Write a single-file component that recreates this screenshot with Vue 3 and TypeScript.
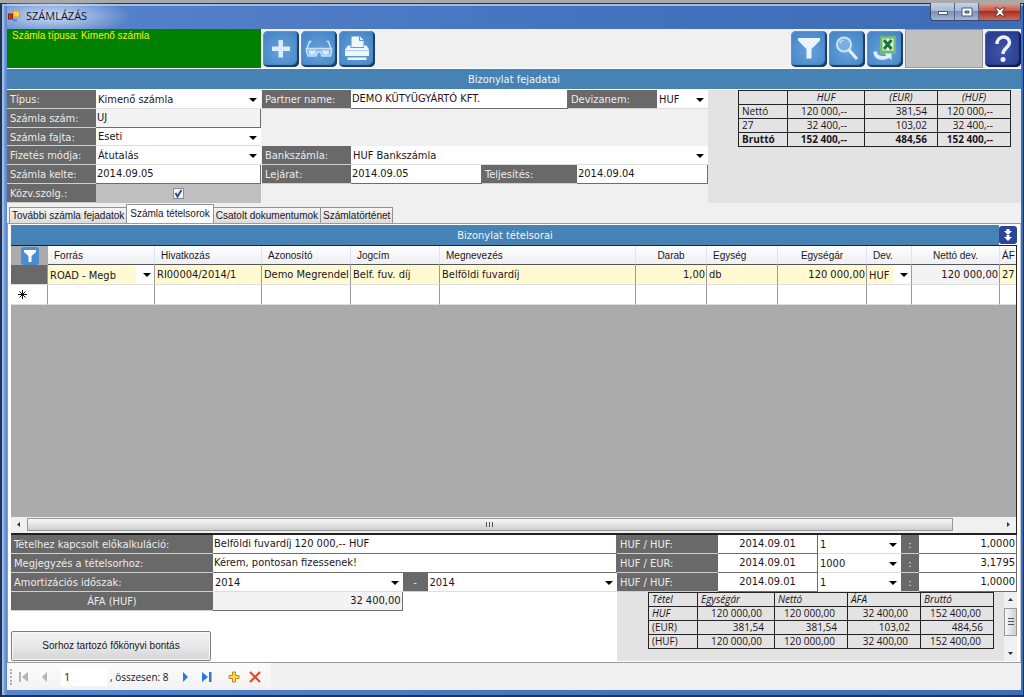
<script setup lang="ts">
import { ref } from 'vue'

interface Column {
  title: string
  width?: number
  kind?: 'center'
}

const columns: Column[] = [
  { title: 'Forrás', width: 107 },
  { title: 'Hivatkozás', width: 107 },
  { title: 'Azonosító', width: 89 },
  { title: 'Jogcím', width: 89 },
  { title: 'Megnevezés', width: 196 },
  { title: 'Darab', width: 71, kind: 'center' },
  { title: 'Egység', width: 71 },
  { title: 'Egységár', width: 89, kind: 'center' },
  { title: 'Dev.', width: 45 },
  { title: 'Nettó dev.', width: 88, kind: 'center' },
  { title: 'ÁF' },
]

const totals = [
  { name: 'Nettó', huf: '120 000,--', eur: '381,54', base: '120 000,--' },
  { name: '27', huf: '32 400,--', eur: '103,02', base: '32 400,--' },
  { name: 'Bruttó', huf: '152 400,--', eur: '484,56', base: '152 400,--' },
]

const rates = [
  { id: 'rate1', pair: 'HUF / HUF:', date: '2014.09.01', unit: '1', value: '1,0000' },
  { id: 'rate2', pair: 'HUF / EUR:', date: '2014.09.01', unit: '1000', value: '3,1795' },
  { id: 'rate3', pair: 'HUF / HUF:', date: '2014.09.01', unit: '1', value: '1,0000' },
]

const itemTotals = [
  { name: 'HUF', cells: ['120 000,00', '120 000,00', '32 400,00', '152 400,00'] },
  { name: '(EUR)', cells: ['381,54', '381,54', '103,02', '484,56'] },
  { name: '(HUF)', cells: ['120 000,00', '120 000,00', '32 400,00', '152 400,00'] },
]

const tabs = ['További számla fejadatok', 'Számla tételsorok', 'Csatolt dokumentumok', 'Számlatörténet']
const activeTab = ref(1)
const mediated = ref(true)
const partner = ref('DEMO KÜTYÜGYÁRTÓ KFT.')
const note = ref('Kérem, pontosan fizessenek!')
</script>

<template>
  <div class="window">
    <header class="titlebar">
      <svg class="app-icon" viewBox="0 0 12 12" width="12" height="12" aria-hidden="true">
        <rect x="5" y="1" width="6.500" height="6" fill="#ffd24a" stroke="#d79a1c" />
        <rect x="0.500" y="4" width="4" height="5" fill="#c8321e" stroke="#8f1d10" />
        <rect x="5" y="9" width="4" height="2.500" fill="#4d8fd8" />
      </svg>
      <h1>SZÁMLÁZÁS</h1>
      <div class="win-buttons">
        <button type="button" aria-label="Kis méret">
          <svg viewBox="0 0 12 10" width="12" height="10"><rect x="1.500" y="4.500" width="9" height="3" fill="#fff" stroke="#44577c" /></svg>
        </button>
        <button type="button" aria-label="Teljes méret">
          <svg viewBox="0 0 12 10" width="12" height="10"><path d="M1 1h10v8H1z M4 4v2h4V4z" fill="#fff" fill-rule="evenodd" stroke="#44577c" /></svg>
        </button>
        <button type="button" class="close" aria-label="Bezárás">
          <svg viewBox="0 0 12 10" width="12" height="10"><path d="M1 1h3l2 2 2-2h3L8 5l3 4H8L6 7 4 9H1l3-4z" fill="#fff" stroke="#6b3036" /></svg>
        </button>
      </div>
    </header>

    <main class="client">
      <div class="toolbar">
        <div class="type-box">Számla típusa: Kimenő számla</div>
        <div class="tools">
          <button type="button" class="tool" aria-label="Új">
            <svg viewBox="0 0 36 36"><path d="M15.500 9h4.500v6.500h7V20h-7v6.500h-4.500V20H9v-4.500h6.500z" fill="#dcecfb" /></svg>
          </button>
          <button type="button" class="tool" aria-label="Megtekintés">
            <svg viewBox="0 0 36 36" fill="none" stroke="#c8e2fa" stroke-width="1.500">
              <path d="M6 18 8.500 10.500h2M30 18l-2.500-7.500h-2" />
              <path d="M5.500 17.500h25v3l-1 4.500H21l-1.500-4h-3L15 25H7l-1.500-4.500z" fill="#7fb5e8" />
              <path d="M8.500 20h6l-1 3H9zM21.500 20h6l-.5 3h-4.500z" fill="#e6f4ff" />
            </svg>
          </button>
          <button type="button" class="tool" aria-label="Nyomtatás">
            <svg viewBox="0 0 36 36" fill="#f0f8ff">
              <path d="M12.500 5.500H21l3.500 3.500V16h-12z" /><path d="M20.500 5.500V9.500h4" fill="none" stroke="#5a94cf" />
              <path d="M9 14.500h2.500V17H25v-2.500h2.500L30 18.500V25H6v-6.500z" />
              <path d="M6 19.500h24" stroke="#a9cdf0" /><path d="M8.500 26.500h19V29h-19z" />
            </svg>
          </button>
        </div>
        <div class="tools tools-right">
          <button type="button" class="tool" aria-label="Szűrés">
            <svg viewBox="0 0 36 36"><path d="M7 7h22v2.500L20.500 18v9.500h-5V18L7 9.500z" fill="#eaf5ff" /></svg>
          </button>
          <button type="button" class="tool" aria-label="Keresés">
            <svg viewBox="0 0 36 36" fill="none">
              <circle cx="15" cy="13.500" r="7" fill="#78aee1" stroke="#cbe4fb" stroke-width="2" />
              <path d="M11 13a4 4 0 0 1 4-4" stroke="#cbe4fb" /><path d="m20 19 8 9" stroke="#e3f1ff" stroke-width="3" />
            </svg>
          </button>
          <button type="button" class="tool" aria-label="Excel export">
            <svg viewBox="0 0 36 36">
              <rect x="13" y="5" width="16" height="18" fill="#6dba70" />
              <path d="M15.500 7.500h11v12h-11z" fill="#dff0dc" />
              <path d="m17 9 7.500 9M24.500 9 17 18" stroke="#18763a" stroke-width="3" />
              <path d="M6.500 20.500h3.500c0 4 5 5.500 9.500 4l-2-2h7v7l-2-2.500C14 31 6 28 6.500 20.500z" fill="#dceeff" />
            </svg>
          </button>
          <div class="blank"></div>
          <button type="button" class="tool help" aria-label="Súgó">
            <svg viewBox="0 0 36 36" fill="none">
              <path d="M12 13c0-9 12.500-9 12.500-1.500 0 5-6.500 5.500-6.500 11.500" stroke="#eef2ff" stroke-width="3.500" />
              <circle cx="18" cy="28.500" r="2.500" fill="#eef2ff" />
            </svg>
          </button>
        </div>
      </div>

      <h2 class="bar">Bizonylat fejadatai</h2>

      <section class="head">
        <div class="head-form">
          <label class="cap" for="tipus">Típus:</label>
          <span class="combo c2"><select id="tipus"><option>Kimenő számla</option></select></span>
          <label class="cap c3" for="partner">Partner name:</label>
          <input id="partner" v-model="partner" class="field partner" type="text">
          <label class="cap deviza" for="deviza">Devizanem:</label>
          <span class="combo deviza-sel"><select id="deviza"><option>HUF</option></select></span>

          <label class="cap r2" for="szam">Számla szám:</label>
          <input id="szam" class="field c2 r2 muted" type="text" value="UJ" readonly>
          <label class="cap r3" for="fajta">Számla fajta:</label>
          <span class="combo c2 r3"><select id="fajta"><option>Eseti</option></select></span>

          <label class="cap r4" for="fizetes">Fizetés módja:</label>
          <span class="combo c2 r4"><select id="fizetes"><option>Átutalás</option></select></span>
          <label class="cap c3 r4" for="bank">Bankszámla:</label>
          <span class="combo bank"><select id="bank"><option>HUF Bankszámla</option></select></span>

          <label class="cap r5" for="kelte">Számla kelte:</label>
          <input id="kelte" class="field c2 r5" type="text" value="2014.09.05">
          <label class="cap c3 r5" for="lejarat">Lejárat:</label>
          <input id="lejarat" class="field lejarat" type="text" value="2014.09.05">
          <label class="cap telj" for="telj">Teljesítés:</label>
          <input id="telj" class="field telj-field" type="text" value="2014.09.04">

          <label class="cap r6" for="kozv">Közv.szolg.:</label>
          <div class="check c2 r6">
            <input id="kozv" v-model="mediated" type="checkbox">
            <svg viewBox="0 0 11 11" width="11" height="11" aria-hidden="true"><path v-if="mediated" d="M2.500 5 4.500 8.500 8.500 2" fill="none" stroke="#3b4a91" stroke-width="2" /></svg>
          </div>
        </div>
        <div class="head-totals">
          <table class="sums">
            <thead><tr><th></th><th>HUF</th><th>(EUR)</th><th>(HUF)</th></tr></thead>
            <tbody>
              <tr v-for="t in totals" :key="t.name">
                <td>{{ t.name }}</td><td class="wide">{{ t.huf }}</td><td class="num">{{ t.eur }}</td><td class="wide">{{ t.base }}</td>
              </tr>
            </tbody>
          </table>
        </div>
      </section>

      <nav class="tabs" role="tablist">
        <button v-for="(t, i) in tabs" :key="t" type="button" role="tab" :aria-selected="i === activeTab" :class="{ active: i === activeTab }" @click="activeTab = i">{{ t }}</button>
      </nav>

      <section class="page">
        <div class="page-head">
          <h2 class="bar">Bizonylat tételsorai</h2>
          <button type="button" class="expand" aria-label="Lenyitás">
            <svg viewBox="0 0 18 18" width="18" height="18"><path d="M7.500 3h3v2H13L9 9 5 5h2.500zM7.500 9h3v2H13l-4 4-4-4h2.500z" fill="#fff" /></svg>
          </button>
        </div>

        <div class="grid">
          <table class="items">
            <colgroup>
              <col class="col-mark">
              <col v-for="c in columns" :key="c.title" :style="c.width ? { width: c.width + 'px' } : {}">
            </colgroup>
            <thead>
              <tr>
                <th class="corner">
                  <button type="button" class="mini" aria-label="Szűrő">
                    <svg viewBox="0 0 18 18" width="18" height="18"><path d="M3 3h12v2l-4.500 4v6h-3V9L3 5z" fill="#fff" /></svg>
                  </button>
                </th>
                <th v-for="c in columns" :key="c.title" :class="c.kind">{{ c.title }}</th>
              </tr>
            </thead>
            <tbody>
              <tr class="filled">
                <td class="mark dark"></td>
                <td class="sel"><span class="combo"><select aria-label="Forrás"><option>ROAD - Megb</option></select></span></td>
                <td>RI00004/2014/1</td>
                <td>Demo Megrendel</td>
                <td>Belf. fuv. díj</td>
                <td>Belföldi fuvardíj</td>
                <td class="right">1,00</td>
                <td>db</td>
                <td class="right">120 000,00</td>
                <td class="sel"><span class="combo"><select aria-label="Deviza"><option>HUF</option></select></span></td>
                <td class="right locked">120 000,00</td>
                <td>27</td>
              </tr>
              <tr>
                <td class="mark">
                  <svg viewBox="0 0 9 9" width="9" height="9"><path d="M4.500 0v9M0 4.500h9M1.500 1.500l6 6M7.500 1.500l-6 6" stroke="#111" /></svg>
                </td>
                <td v-for="c in columns" :key="c.title"></td>
              </tr>
            </tbody>
          </table>
          <div class="hscroll" aria-hidden="true">
            <svg viewBox="0 0 15 15" width="15" height="15"><path d="M9 5v5L6 7.500z" fill="#333" /></svg>
            <div class="track"><div class="thumb"><i></i><i></i><i></i></div></div>
            <svg viewBox="0 0 15 15" width="15" height="15"><path d="M6 5v5l3-2.500z" fill="#333" /></svg>
          </div>
        </div>

        <div class="detail">
          <div class="detail-left">
            <label class="cap" for="elokalk">Tételhez kapcsolt előkalkuláció:</label>
            <input id="elokalk" class="field span" type="text" value="Belföldi fuvardíj 120 000,-- HUF">
            <label class="cap" for="megj">Megjegyzés a tételsorhoz:</label>
            <input id="megj" v-model="note" class="field span" type="text">
            <label class="cap" for="amort">Amortizációs időszak:</label>
            <span class="combo"><select id="amort"><option>2014</option></select></span>
            <span class="cap mid">-</span>
            <span class="combo"><select aria-label="Időszak vége"><option>2014</option></select></span>
            <label class="cap mid" for="afa">ÁFA (HUF)</label>
            <input id="afa" class="field muted right" type="text" value="32 400,00" readonly>
            <div class="action span-all"><button type="button">Sorhoz tartozó főkönyvi bontás</button></div>
          </div>
          <div class="detail-right">
            <div v-for="r in rates" :key="r.id" class="rate">
              <label class="cap" :for="r.id">{{ r.pair }}</label>
              <input class="field date" type="text" :value="r.date" aria-label="Dátum">
              <span class="combo"><select aria-label="Egység"><option>{{ r.unit }}</option></select></span>
              <span class="cap mid">:</span>
              <input :id="r.id" class="field right" type="text" :value="r.value">
            </div>
            <div class="item-sums">
              <table class="sums">
                <thead><tr><th>Tétel</th><th>Egységár</th><th>Nettó</th><th>ÁFA</th><th>Bruttó</th></tr></thead>
                <tbody>
                  <tr v-for="t in itemTotals" :key="t.name">
                    <td>{{ t.name }}</td>
                    <td v-for="(v, i) in t.cells" :key="i" :class="t.name === '(EUR)' ? 'num' : 'near'">{{ v }}</td>
                  </tr>
                </tbody>
              </table>
              <div class="vscroll" aria-hidden="true">
                <svg viewBox="0 0 13 15" width="13" height="15"><path d="M4 9h5L6.500 6z" fill="#333" /></svg>
                <div class="vthumb"><i></i><i></i><i></i></div>
                <svg viewBox="0 0 13 15" width="13" height="15"><path d="M4 6h5L6.500 9z" fill="#333" /></svg>
              </div>
            </div>
          </div>
        </div>
      </section>

      <footer class="navigator">
        <div class="nav-strip">
          <i class="grip"></i>
          <button type="button" aria-label="Első"><svg viewBox="0 0 12 12" width="12" height="12"><path d="M1 1h2v10H1zM10 1v10L4 6z" fill="#b4b4b4" /></svg></button>
          <button type="button" aria-label="Előző"><svg viewBox="0 0 12 12" width="12" height="12"><path d="M8 1v10L3 6z" fill="#b4b4b4" /></svg></button>
          <i class="sep"></i>
          <input class="pos" type="text" value="1" aria-label="Pozíció">
          <span class="count">, összesen: 8</span>
          <i class="sep"></i>
          <button type="button" aria-label="Következő"><svg viewBox="0 0 12 12" width="12" height="12"><path d="M3 1v10l5-5z" fill="#2f74e0" /></svg></button>
          <button type="button" aria-label="Utolsó"><svg viewBox="0 0 12 12" width="12" height="12"><path d="M1 1v10l6-5zM8 1h2.500v10H8z" fill="#2f74e0" /></svg></button>
          <i class="sep"></i>
          <button type="button" aria-label="Hozzáadás"><svg viewBox="0 0 12 12" width="12" height="12"><path d="M4.500 1h3v3.500H11v3H7.500V11h-3V7.500H1v-3h3.500z" fill="#ffdc50" stroke="#c08a10" /></svg></button>
          <button type="button" aria-label="Törlés"><svg viewBox="0 0 12 12" width="12" height="12"><path d="m1 1 10 10M11 1 1 11" stroke="#f0431f" stroke-width="2" /></svg></button>
          <i class="sep end"></i>
        </div>
      </footer>
    </main>
  </div>
</template>

<style>
html,
body {
  background: #b9b7b2;
}
</style>

<style scoped>
* {
  box-sizing: border-box;
}

.window {
  display: flex;
  flex-direction: column;
  min-height: 100vh;
  padding: 0 3px 7px 7px;
  border-top: 3px solid #a9a9a9;
  background: linear-gradient(90deg, #a5c2ec 0, #5884cc 7px, #4472bd 60%, #3f6cb6);
  box-shadow: inset 2px 1px 0 #22344f, inset -1px -2px 0 #1d3557, inset 4px 3px 0 #9dbde8;
  font-family: "DejaVu Sans Condensed", "Noto Sans", sans-serif;
  font-size: 11px;
  line-height: 14px;
  color: #1c1420;
}

button,
input,
select {
  margin: 0;
  padding: 0;
  border: 0;
  border-radius: 0;
  background: none;
  font: inherit;
  color: inherit;
  outline: none;
}

h1,
h2 {
  margin: 0;
  font-size: 11px;
  font-weight: 400;
}

svg {
  display: block;
}

.titlebar {
  display: flex;
  align-items: center;
  gap: 6px;
  height: 26px;
  flex: none;
  padding-left: 1px;
  background: radial-gradient(ellipse 80px 20px at 45px 13px, rgba(220, 232, 250, 0.9), rgba(220, 232, 250, 0));
}

h1 {
  flex: 1;
  font-family: "Open Sans", sans-serif;
  color: #15151c;
}

.win-buttons {
  display: flex;
  align-self: flex-start;
  border: 1px solid #35496e;
  border-top: 0;
  border-radius: 0 0 4px 4px;
  overflow: hidden;
}

.win-buttons button {
  display: flex;
  align-items: center;
  justify-content: center;
  width: 24px;
  height: 17px;
  border-right: 1px solid #50648c;
  background: linear-gradient(#c6d2e6, #a9b8d4 45%, #7d90b6 50%, #a5b6d4);
}

.win-buttons .close {
  width: 41px;
  border-right: 0;
  background: linear-gradient(#dba093, #c25a4a 45%, #a82e20 50%, #cf6a56);
}

.client {
  flex: 1;
  display: flex;
  flex-direction: column;
  background: #f0f0f0;
}

.toolbar {
  display: flex;
  height: 40px;
  border-bottom: 1px solid #fff;
}

.type-box {
  width: 254px;
  padding-left: 5px;
  background: #008000;
  color: #f2f20c;
  font-family: "Liberation Sans", sans-serif;
  font-size: 10px;
}

.tools {
  display: flex;
  align-items: center;
  gap: 2px;
  padding-left: 2px;
}

.tools-right {
  margin-left: auto;
}

.tool {
  width: 36px;
  height: 36px;
  border-radius: 5px;
  background: radial-gradient(circle at 50% 55%, #67a3dc, #3f80c2);
  box-shadow: inset -2px -2px 1px #1b3c66, inset 1px 1px 0 #5a95d0;
}

.tool svg {
  width: 36px;
  height: 36px;
}

.help {
  background: radial-gradient(circle at 50% 55%, #4157a8, #22348a);
  box-shadow: inset -2px -2px 1px #101d50, inset 1px 1px 0 #4a5db0;
}

.blank {
  width: 78px;
  height: 39px;
  border: 1px solid #999;
  background: #c0c0c0;
}

.bar {
  height: 20px;
  background: #4682b4;
  color: #f0f6fb;
  line-height: 21px;
  text-align: center;
}

.head {
  display: flex;
  border-top: 1px solid #fff;
}

.head-form {
  display: grid;
  width: 701px;
  grid-template-columns: 89px 166px 89px 131px 86px 9px 80px 51px;
  grid-template-rows: 19px 19px 18px 19px 19px 19px;
}

.cap {
  overflow: hidden;
  padding: 0 3px;
  border-bottom: 1px solid #cfcfcf;
  background: #696969;
  color: #ececec;
  line-height: 19px;
  white-space: nowrap;
}

.mid {
  text-align: center;
}

.field {
  width: 100%;
  min-width: 0;
  height: 100%;
  padding: 0 1px 1px;
  border-right: 1px solid #6d6d6d;
  border-bottom: 1px solid #6d6d6d;
  background: #fff;
}

.muted {
  background: #f3f3f3;
}

.right {
  text-align: right;
}

.combo {
  position: relative;
  display: block;
  min-width: 0;
  background: #fff;
  border-bottom: 1px solid #dedede;
}

.combo::after {
  content: "";
  position: absolute;
  right: 4px;
  top: 8px;
  border: 4px solid transparent;
  border-top-color: #000;
  border-bottom-width: 0;
  pointer-events: none;
}

.combo select {
  display: block;
  width: 100%;
  height: 100%;
  padding: 1px 14px 0 2px;
  appearance: none;
}

.head-form .cap,
.head-form .combo,
.head-form .field {
  grid-row: 1;
}

.head-form > .c2 { grid-column: 2; width: auto; margin-right: 1px; }
.head-form > .c3 { grid-column: 3; }
.head-form > .partner { grid-column: 4 / 6; }
.head-form > .deviza { grid-column: 6 / 8; }
.head-form > .deviza-sel { grid-column: 8; }
.head-form > .r2 { grid-row: 2; }
.head-form > .r3 { grid-row: 3; }
.head-form > .r4 { grid-row: 4; }
.head-form > .bank { grid-row: 4; grid-column: 4 / -1; }
.head-form > .r5 { grid-row: 5; }
.head-form > .lejarat { grid-row: 5; grid-column: 4; }
.head-form > .telj { grid-row: 5; grid-column: 5 / 7; }
.head-form > .telj-field { grid-row: 5; grid-column: 7 / -1; }
.head-form > .r6 { grid-row: 6; }

.check {
  display: grid;
  place-items: center;
  background: #bfbfbf;
}

.check input {
  grid-area: 1 / 1;
  width: 11px;
  height: 11px;
  border: 1px solid #8c8c94;
  background: #f2f5fc;
  appearance: none;
}

.check svg {
  grid-area: 1 / 1;
  pointer-events: none;
}

.head-totals {
  flex: 1;
  padding-left: 30px;
  background: #e3e3e3;
}

.sums {
  width: 273px;
  border-collapse: collapse;
  table-layout: fixed;
  font-family: "Open Sans", sans-serif;
  font-size: 10px;
  line-height: 13px;
}

.sums th,
.sums td {
  height: 14px;
  padding: 0 3px;
  border: 1px solid #222;
  white-space: nowrap;
}

.sums th {
  font-style: italic;
  font-weight: 400;
}

.sums .num { padding-right: 10px; text-align: right; }
.sums .wide { padding-right: 17px; text-align: right; }
.sums .near { padding-right: 12px; text-align: right; }
.head-totals th:first-child { width: 49px; }
.head-totals th:nth-child(2) { width: 77px; }
.head-totals tbody tr:last-child { font-weight: 700; }

.tabs {
  display: flex;
  align-items: flex-end;
  height: 20px;
  padding-left: 2px;
}

.tabs button {
  height: 16px;
  padding: 0 2px;
  border: 1px solid #8f9299;
  border-bottom: 0;
  margin-left: -1px;
  background: linear-gradient(#f4f4f4, #dcdcdc);
  font-family: "Liberation Sans", sans-serif;
  font-size: 10px;
  white-space: nowrap;
}

.tabs button:first-child {
  margin-left: 0;
}

.tabs .active {
  height: 19px;
  padding: 0 3px;
  background: #fff;
}

.page {
  flex: 1;
  display: flex;
  flex-direction: column;
  padding: 1px 3px 1px;
  border: 1px solid #9a9a9a;
  border-right-color: #c4c4c4;
  background: #fff;
}

.page-head {
  display: flex;
}

.page-head .bar {
  flex: 1;
}

.expand,
.mini {
  width: 18px;
  height: 18px;
  border-radius: 3px;
}

.expand {
  margin-top: 1px;
  background: #2c4597;
}

.mini {
  display: block;
  margin: 0 auto;
  background: #4a8dd0;
}

.grid {
  flex: 1;
  display: flex;
  flex-direction: column;
  min-height: 160px;
  border: solid #222;
  border-width: 1px 1px 2px 0;
  background: #ababab;
  overflow: hidden;
}

.items {
  width: 100%;
  border-collapse: separate;
  border-spacing: 0;
  table-layout: fixed;
}

.col-mark {
  width: 37px;
}

.items th {
  height: 19px;
  padding: 2px 6px 0;
  border-bottom: 1px solid #555;
  border-right: 1px solid #e2e3ea;
  background: linear-gradient(#fff, #eeeff4);
  font-family: "Liberation Sans", sans-serif;
  font-size: 10px;
  font-weight: 400;
  text-align: left;
  white-space: nowrap;
  overflow: hidden;
}

.items th.center {
  text-align: center;
}

.items th.corner {
  padding: 0;
  border: 0;
  background: #ababab;
}

.items th:last-child {
  padding-right: 0;
  padding-left: 2px;
  border-right: 0;
}

.items td {
  height: 20px;
  padding: 0 1px 0 2px;
  border-right: 1px solid #9b9b9b;
  border-bottom: 1px solid #ddd;
  background: #fff;
  line-height: 19px;
  white-space: nowrap;
  overflow: hidden;
}

.items td:last-child {
  border-right: 0;
}

.items .filled td {
  background: #fffad2;
}

.items .filled .mark {
  background: #696969;
}

.items .filled .locked {
  background: #f3f3f3;
}

.items .filled .sel {
  padding: 0;
}

.items .mark {
  padding-left: 7px;
}

.items .combo {
  height: 19px;
  border: 0;
  background: linear-gradient(90deg, #fffad2 calc(100% - 18px), #fff calc(100% - 18px));
}

.items .combo::after {
  right: 3px;
}

.hscroll {
  display: flex;
  height: 16px;
  margin-top: auto;
  background: #f0f0f0;
}

.track {
  flex: 1;
}

.thumb {
  display: flex;
  align-items: center;
  justify-content: center;
  gap: 1px;
  width: 95%;
  height: 13px;
  margin: 1px 1px 0;
  border: 1px solid #999;
  background: linear-gradient(#f8f8f8, #e4e4e4 50%, #cecece);
}

.thumb i {
  width: 2px;
  height: 5px;
  border-left: 1px solid #555;
}

.detail {
  display: flex;
}

.detail-left {
  flex: 1;
  display: grid;
  grid-template-columns: 202px 1fr 25px 1fr;
  grid-template-rows: 19px 19px 19px 19px 50px;
}

.span {
  grid-column: 2 / -1;
}

.span-all {
  grid-column: 1 / -1;
}

.action {
  display: flex;
  align-items: flex-end;
}

.action button {
  width: 200px;
  height: 30px;
  border: 1px solid #7d7d7d;
  border-radius: 2px;
  background: linear-gradient(#f3f3f3, #e8e8e8 50%, #d4d4d4);
  box-shadow: inset 0 0 0 1px #fafafa;
  font-family: "Liberation Sans", sans-serif;
  font-size: 10px;
}

.detail-right {
  width: 400px;
}

.rate {
  display: grid;
  grid-template-columns: 101px 100px 83px 18px 1fr;
  height: 19px;
}

.field.date {
  text-align: center;
}

.item-sums {
  display: flex;
  justify-content: space-between;
  height: 69px;
  padding-left: 31px;
  background: #e3e3e3;
}

.item-sums .sums {
  width: 346px;
  height: 57px;
}

.item-sums th { text-align: left; }
.item-sums th:first-child { width: 49px; }
.item-sums th:nth-child(2) { width: 77px; }
.item-sums th:nth-child(3) { width: 73px; }
.item-sums tbody tr:first-child td:first-child { font-style: italic; }

.vscroll {
  display: flex;
  flex-direction: column;
  justify-content: space-between;
  width: 13px;
  background: #f0f0f0;
}

.vthumb {
  display: flex;
  flex-direction: column;
  align-items: center;
  justify-content: center;
  gap: 1px;
  height: 28px;
  margin-bottom: 10px;
  border: 1px solid #999;
  background: linear-gradient(90deg, #f8f8f8, #d0d0d0);
}

.vthumb i {
  width: 6px;
  height: 2px;
  border-top: 1px solid #555;
}

.navigator {
  height: 27px;
  padding-left: 2px;
}

.nav-strip {
  display: flex;
  align-items: center;
  width: 262px;
  height: 27px;
  background: linear-gradient(#fcfcfc, #f2f2f2);
  font-family: "Open Sans", sans-serif;
}

.nav-strip button {
  flex: none;
  width: 21px;
  padding-left: 5px;
}

.grip {
  width: 4px;
  height: 16px;
  margin: 0 1px;
  border-left: 2px dotted #b0b0b0;
}

.sep {
  width: 1px;
  height: 18px;
  margin: 0 3px;
  background: #c8c8c8;
}

.sep.end {
  margin-left: 10px;
}

.pos {
  width: 46px;
  height: 18px;
  padding-left: 3px;
  background: #fff;
}

.count {
  flex: 1;
  padding-left: 3px;
  font-size: 10px;
  white-space: nowrap;
}
</style>
